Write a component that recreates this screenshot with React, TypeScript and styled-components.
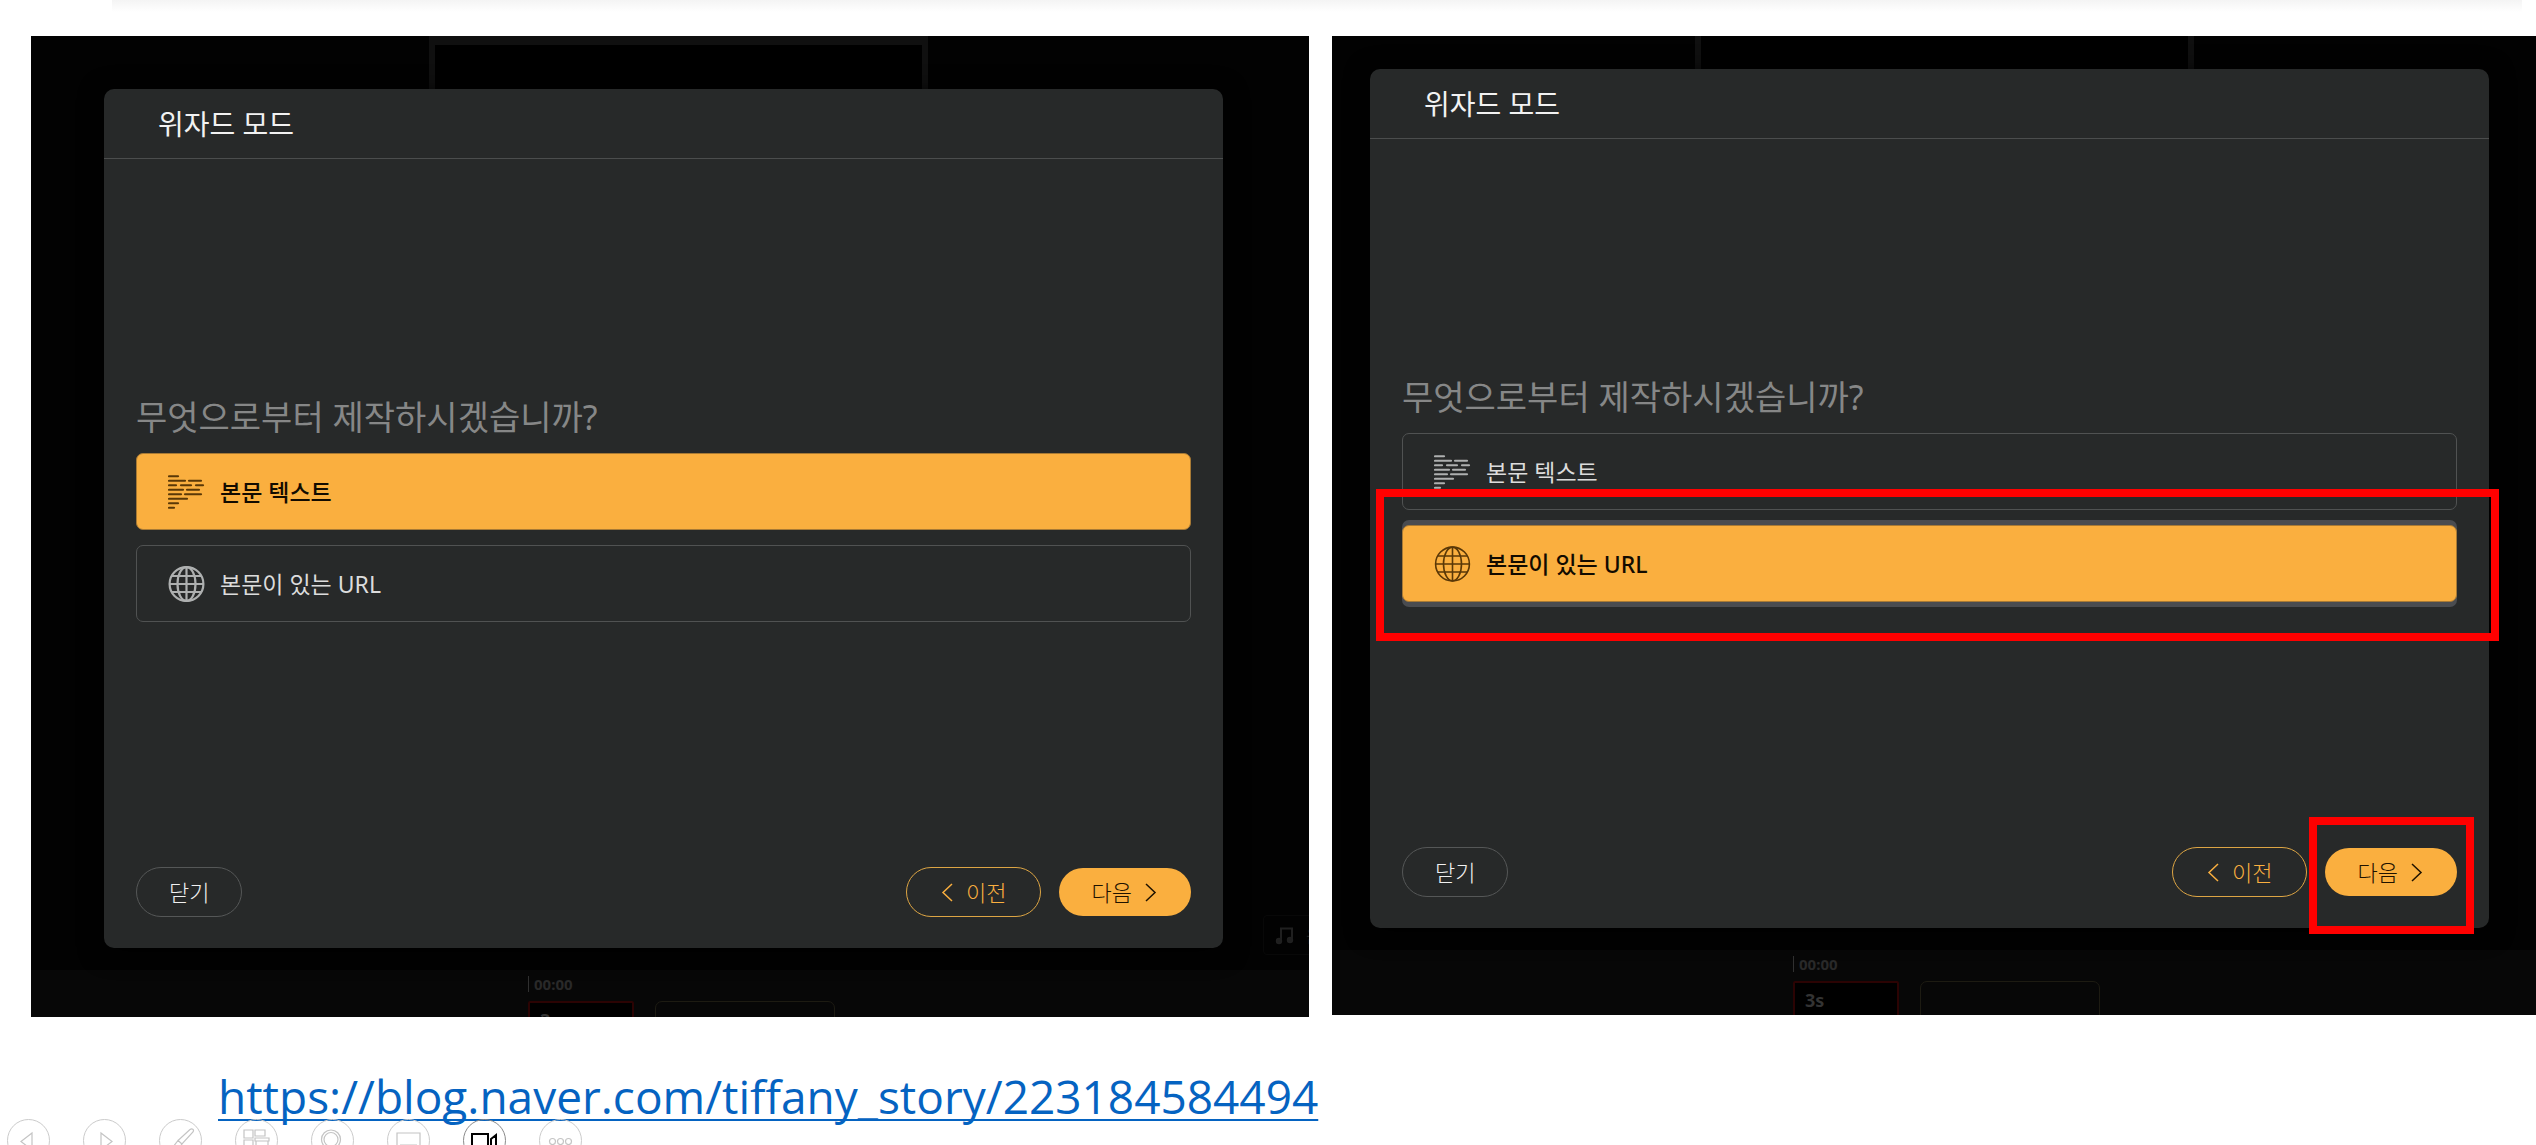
import React from 'react';
import styled, { createGlobalStyle } from 'styled-components';

const GlobalStyle = createGlobalStyle`
  *, *::before, *::after { box-sizing: border-box; }
  body {
    margin: 0;
    background: #ffffff;
    font-family: "Noto Sans", "Noto Sans CJK KR", sans-serif;
  }
`;

const accent = '#faaf3f';

const Page = styled.main`
  height: 100vh;
  overflow: hidden;
`;

const TopShadow = styled.div`
  height: 12px;
  margin: 0 14px 24px 112px;
  background: linear-gradient(#f4f4f4, #ffffff);
`;

const Shots = styled.div`
  display: grid;
  grid-template-columns: 1278fr 1204fr;
  align-items: start;
  gap: 23px;
  padding-left: 31px;
`;

const Shot = styled.section`
  position: relative;
  display: flex;
  flex-direction: column;
  min-width: 0;
  overflow: hidden;
  background: #020202;
`;

const CanvasFrame = styled.div<{ $left: number; $top: number }>`
  position: absolute;
  top: 0;
  left: ${(p) => p.$left}px;
  width: 499px;
  height: 90px;
  border: solid #101010;
  border-width: ${(p) => p.$top}px 6px 0;
  background: #000000;
`;

const Dialog = styled.div<{ $margin: string }>`
  position: relative;
  margin: ${(p) => p.$margin};
  border-radius: 10px;
  background: #272929;
  box-shadow: 0 4px 24px #000000;
`;

const DialogHeader = styled.header`
  padding: 2px 54px 0;
  border-bottom: 1px solid #4b4d4d;
`;

const DialogTitle = styled.h2`
  margin: 0;
  font-size: 28px;
  font-weight: 400;
  line-height: 67px;
  color: #f2f2f2;
`;

const DialogBody = styled.div`
  display: flex;
  flex-direction: column;
  padding: 234px 32px 245px;
`;

const Question = styled.p`
  margin: 0 0 12px;
  font-size: 34px;
  line-height: 48px;
  color: #868787;
`;

const Options = styled.div`
  display: flex;
  flex-direction: column;
  gap: 15px;
`;

const Marked = styled.div`
  position: relative;
  display: flex;
`;

const RedFrame = styled.span<{ $inset: string }>`
  position: absolute;
  inset: ${(p) => p.$inset};
  z-index: 1;
  border: 8px solid #ff0000;
  pointer-events: none;
`;

const Option = styled.button<{ $selected?: boolean; $focused?: boolean }>`
  display: flex;
  flex: 1;
  align-items: center;
  gap: 15px;
  height: 77px;
  padding: 0 31px;
  border: 1px solid ${(p) => (p.$selected ? '#a87a35' : '#505252')};
  border-radius: 7px;
  background: ${(p) => (p.$selected ? accent : 'transparent')};
  box-shadow: ${(p) => (p.$focused ? '0 5px 0 #4a4c50, 0 -5px 0 #4a4c50' : 'none')};
  font-family: inherit;
  font-size: 23px;
  font-weight: ${(p) => (p.$selected ? 500 : 400)};
  line-height: 32px;
  color: ${(p) => (p.$selected ? '#120b00' : '#dcdcdc')};

  svg {
    flex: none;
    color: ${(p) => (p.$selected ? '#5a3807' : '#aeb0b0')};
  }
`;

const DialogFooter = styled.footer`
  display: flex;
  align-items: center;
  gap: 18px;
  padding: 0 32px 31px;
`;

const Spacer = styled.span`
  flex: 1;
`;

const PillButton = styled.button<{ $kind: 'plain' | 'outline' | 'solid' }>`
  display: flex;
  align-items: center;
  gap: 12px;
  height: ${(p) => (p.$kind === 'solid' ? 48 : 50)}px;
  padding: 0 ${(p) => (p.$kind === 'plain' ? 32 : 33)}px;
  border: ${(p) =>
    p.$kind === 'solid' ? 'none' : `1px solid ${p.$kind === 'outline' ? '#dda544' : '#555757'}`};
  border-radius: 25px;
  background: ${(p) => (p.$kind === 'solid' ? accent : 'transparent')};
  font-family: inherit;
  font-size: 22px;
  font-weight: 300;
  line-height: 32px;
  color: ${(p) => ({ plain: '#f0f0f0', outline: accent, solid: '#1e1200' })[p.$kind]};
`;

const Timeline = styled.div<{ $left: number; $height: number }>`
  height: ${(p) => p.$height}px;
  padding: 6px 0 0 ${(p) => p.$left}px;
  overflow: hidden;
  background: #070707;
`;

const TimeMark = styled.div`
  padding-left: 5px;
  border-left: 1px solid #303030;
  font-size: 15px;
  font-weight: 700;
  line-height: 16px;
  color: #292929;
`;

const Clips = styled.div`
  display: flex;
  gap: 21px;
  margin-top: 9px;
`;

const Clip = styled.div<{ $active?: boolean }>`
  width: ${(p) => (p.$active ? 106 : 180)}px;
  height: 80px;
  padding: 6px 10px;
  border: ${(p) => (p.$active ? '2px solid #2b0303' : '1px solid #1d1b12')};
  border-radius: ${(p) => (p.$active ? 2 : 7)}px;
  background: ${(p) => (p.$active ? '#000000' : 'transparent')};
  font-size: 18px;
  font-weight: 700;
  line-height: 22px;
  color: #333333;
`;

const MusicButton = styled.button<{ $left: number; $top: number }>`
  position: absolute;
  left: ${(p) => p.$left}px;
  top: ${(p) => p.$top}px;
  display: flex;
  align-items: center;
  gap: 12px;
  width: 110px;
  height: 40px;
  padding: 0 11px;
  border: 1px solid #080808;
  border-radius: 4px;
  background: transparent;
  font-family: inherit;
  font-size: 18px;
  white-space: nowrap;
  color: #202020;

  svg {
    flex: none;
  }
`;

const LinkRow = styled.p`
  margin: 0;
  padding: 57px 0 0 218px;
  font-family: "Open Sans", "Noto Sans", sans-serif;
  font-size: 46px;
  line-height: 45px;
`;

const BlogLink = styled.a`
  color: #0563c1;
  text-decoration: underline;
  text-decoration-thickness: 2px;
  text-underline-offset: 5px;
  text-decoration-skip-ink: none;
`;

const SlideControls = styled.nav`
  position: relative;
  display: flex;
  gap: 33px;
  padding-left: 7px;
`;

const RoundButton = styled.button<{ $strong?: boolean }>`
  width: 43px;
  height: 43px;
  padding: 0;
  border: 1px solid ${(p) => (p.$strong ? '#8a8a8a' : '#cbcbcb')};
  border-radius: 50%;
  background: transparent;
  color: ${(p) => (p.$strong ? '#000000' : '#c4c4c4')};

  svg {
    display: block;
  }
`;

const textRows: Array<Array<[number, number]>> = [
  [[0, 11]],
  [[0, 18], [20, 34]],
  [[0, 9], [12, 24], [27, 36]],
  [[0, 16], [18, 32]],
  [[0, 14], [16, 34]],
  [[0, 20]],
  [[0, 11]],
  [[0, 7]],
];

const TextIcon = () => (
  <svg width="37" height="36" viewBox="0 0 37 36" fill="none" stroke="currentColor" strokeWidth="2.2" strokeLinecap="round" aria-hidden="true">
    {textRows.map((row, i) =>
      row.map(([a, b]) => (
        <path key={`${i}-${a}`} d={`M${a + 1} ${2.25 + i * 4.5}H${b - 1}`} />
      )),
    )}
  </svg>
);

const GlobeIcon = ({ bold }: { bold?: boolean }) => (
  <svg width="37" height="36" viewBox="0 0 37 36" fill="none" stroke="currentColor" strokeWidth={bold ? 2.2 : 1.6} aria-hidden="true">
    <circle cx="18.5" cy="18" r="16.9" />
    <ellipse cx="18.5" cy="18" rx="9" ry="16.9" />
    <path d="M18.5 1v34M1.6 18h33.8M3.8 10h29.4M3.8 26h29.4" />
  </svg>
);

const Chevron = ({ back }: { back?: boolean }) => (
  <svg width="14" height="20" viewBox="0 0 14 20" fill="none" stroke="currentColor" strokeWidth="1.5" aria-hidden="true">
    <path d={back ? 'M12 2L3 10.500L12 19' : 'M2 2L11 10.500L2 19'} />
  </svg>
);

const MusicIcon = () => (
  <svg width="19" height="19" viewBox="0 0 19 19" fill="none" stroke="currentColor" strokeWidth="2" aria-hidden="true">
    <path d="M6 15V2.500h11V14" />
    <circle cx="4" cy="15" r="2.200" fill="currentColor" />
    <circle cx="15" cy="14" r="2.200" fill="currentColor" />
  </svg>
);

interface WizardProps {
  margin: string;
  urlSelected?: boolean;
}

const Wizard = ({ margin, urlSelected }: WizardProps) => (
  <Dialog $margin={margin} role="dialog" aria-label="위자드 모드">
    <DialogHeader>
      <DialogTitle>위자드 모드</DialogTitle>
    </DialogHeader>
    <DialogBody>
      <Question>무엇으로부터 제작하시겠습니까?</Question>
      <Options>
        <Marked>
          <Option type="button" $selected={!urlSelected} aria-pressed={!urlSelected}>
            <TextIcon />
            본문 텍스트
          </Option>
        </Marked>
        <Marked>
          <Option type="button" $selected={urlSelected} $focused={urlSelected} aria-pressed={!!urlSelected}>
            <GlobeIcon bold={!urlSelected} />
            본문이 있는 URL
          </Option>
          {urlSelected && <RedFrame $inset="-36px -42px -39px -26px" />}
        </Marked>
      </Options>
    </DialogBody>
    <DialogFooter>
      <PillButton type="button" $kind="plain">닫기</PillButton>
      <Spacer />
      <PillButton type="button" $kind="outline">
        <Chevron back />
        이전
      </PillButton>
      <Marked>
        <PillButton type="button" $kind="solid">
          다음
          <Chevron />
        </PillButton>
        {urlSelected && <RedFrame $inset="-31px -17px -38px -16px" />}
      </Marked>
    </DialogFooter>
  </Dialog>
);

const Track = ({ left, height }: { left: number; height: number }) => (
  <Timeline $left={left} $height={height}>
    <TimeMark>00:00</TimeMark>
    <Clips>
      <Clip $active>3s</Clip>
      <Clip />
    </Clips>
  </Timeline>
);

const controls: Array<{ label: string; strong?: boolean; art: React.ReactNode }> = [
  { label: '이전 슬라이드', art: <path d="M24 13v17L13 21.500z" /> },
  { label: '다음 슬라이드', art: <path d="M17 13v17l11-8.500z" /> },
  {
    label: '펜',
    art: <path d="M30 9.500c2-1.500 4.500 0 3 2.500L22 24l-4-3.500zM18 20.500l4 3.500-3 4-6 2 1.500-5z" />,
  },
  {
    label: '모든 슬라이드',
    art: <path d="M8 10h9v8H8zM19 10h10v6H19zM8 20h9v8H8zM19 18h14v3H19zM20 21v10M32 21v10" />,
  },
  {
    label: '확대',
    art: (
      <>
        <circle cx="19" cy="19.500" r="9.500" />
        <circle cx="19" cy="19.500" r="7" />
        <path d="M25 27l5 5M27 25l5 5" />
      </>
    ),
  },
  { label: '자막', art: <path d="M9 13h23v18H9zM12 25h17M12 26.500h17" /> },
  {
    label: '카메라',
    strong: true,
    art: <path strokeWidth="2" d="M8 14h16v17H8zM27 19l5-4v14l-5-4z" />,
  },
  {
    label: '기타',
    art: (
      <>
        <circle cx="12.500" cy="21.500" r="3" />
        <circle cx="20.500" cy="21.500" r="3" />
        <circle cx="28.500" cy="21.500" r="3" />
      </>
    ),
  },
];

export default function App() {
  return (
    <Page>
      <GlobalStyle />
      <TopShadow />
      <Shots>
        <Shot>
          <CanvasFrame $left={398} $top={9} />
          <Wizard margin="53px 86px 22px 73px" />
          <Track left={497} height={47} />
          <MusicButton type="button" $left={1232} $top={879}>
            <MusicIcon />
            음악
          </MusicButton>
        </Shot>
        <Shot>
          <CanvasFrame $left={363} $top={0} />
          <Wizard margin="33px 47px 22px 38px" urlSelected />
          <Track left={461} height={65} />
        </Shot>
      </Shots>
      <LinkRow>
        <BlogLink href="https://blog.naver.com/tiffany_story/223184584494">
          https://blog.naver.com/tiffany_story/223184584494
        </BlogLink>
      </LinkRow>
      <SlideControls aria-label="슬라이드 쇼">
        {controls.map((c) => (
          <RoundButton key={c.label} type="button" aria-label={c.label} $strong={c.strong}>
            <svg width="41" height="41" viewBox="0 0 41 41" fill="none" stroke="currentColor" strokeWidth="1.2" aria-hidden="true">
              {c.art}
            </svg>
          </RoundButton>
        ))}
      </SlideControls>
    </Page>
  );
}
